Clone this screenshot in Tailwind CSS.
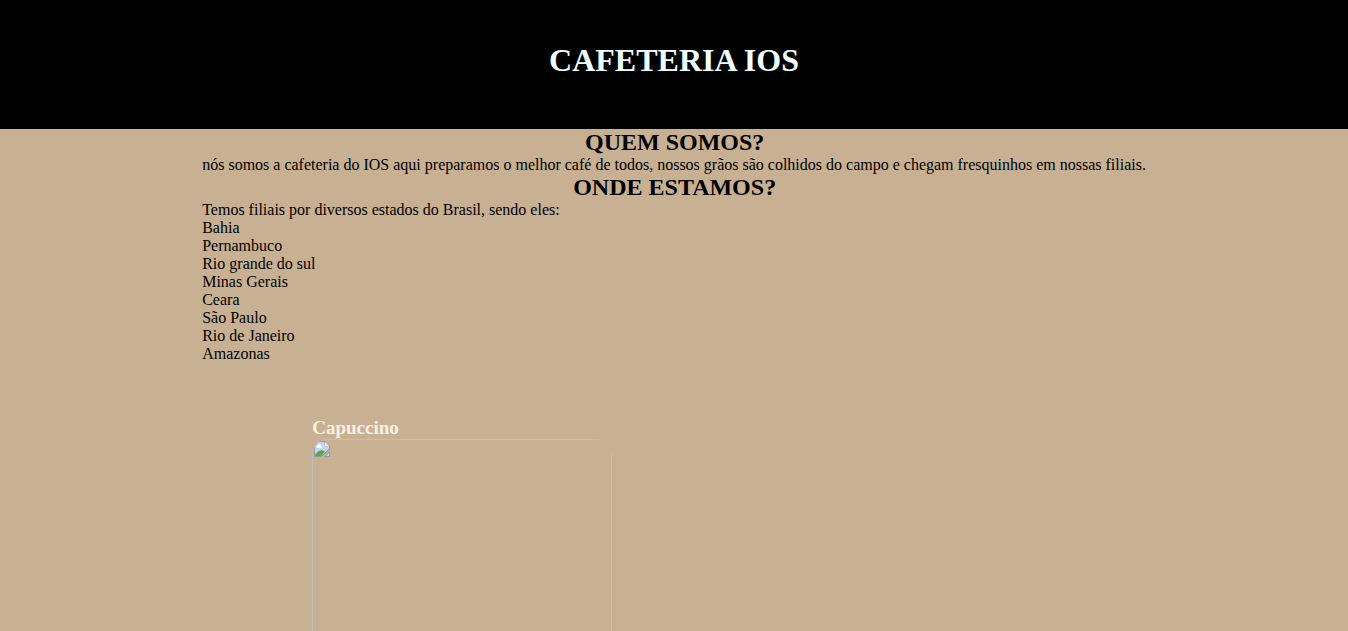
<!DOCTYPE html>
<html lang="pt-BR">
<head>
<meta charset="utf-8">
<title>Cafeteria IOS</title>
<script src="https://cdn.jsdelivr.net/npm/@tailwindcss/browser@4"></script>
</head>
<body class="h-screen overflow-hidden bg-[#c8b192] font-['Liberation_Serif',serif] text-base leading-[18px] text-black">
<header class="bg-black pt-[42px] pb-[51px]">
  <h1 class="text-center text-[32px] leading-[36px] font-bold text-[#f0ffff]">CAFETERIA IOS</h1>
</header>
<main class="pr-[14.9%] pl-[15%]">
  <section>
    <h2 class="text-center text-2xl leading-[27px] font-bold">QUEM SOMOS?</h2>
    <p>nós somos a cafeteria do IOS aqui preparamos o melhor café de todos, nossos grãos são colhidos do campo e chegam fresquinhos em nossas filiais.</p>
  </section>
  <section>
    <h2 class="text-center text-2xl leading-[27px] font-bold">ONDE ESTAMOS?</h2>
    <p>Temos filiais por diversos estados do Brasil, sendo eles:</p>
    <ul>
      <li>Bahia</li>
      <li>Pernambuco</li>
      <li>Rio grande do sul</li>
      <li>Minas Gerais</li>
      <li>Ceara</li>
      <li>São Paulo</li>
      <li>Rio de Janeiro</li>
      <li>Amazonas</li>
    </ul>
  </section>
  <article class="mt-[54px] ml-[110px] w-[300px]">
    <h3 class="mb-px text-[19px] leading-[21px] font-bold text-[#faf0e6]">Capuccino</h3>
    <div class="overflow-hidden rounded-[15px/20px]">
      <div class="h-[400px] border border-[#c0c0c0] p-px">
        <svg class="block" width="16" height="16" viewBox="0 0 16 16" role="img" aria-label="Imagem indisponível">
          <path d="M0 0h11l5 5v3l-8.500 8H0z" fill="#939ba5"/>
          <path d="M1 1h9.500v4.500H15v2L6.500 15H1z" fill="#dfe9fa"/>
          <path d="M1 1h9v5h5v1.500L6 15H1z" fill="#c3d5f4"/>
          <path d="M3 7a1.500 1.500 0 0 1 .5-2.500 1.800 1.800 0 0 1 3.500.5 1.200 1.200 0 0 1 0 2z" fill="#fff"/>
          <path d="M1 15v-1c1.500-3 4.500-5.500 8-4.500l2 1L6.500 15z" fill="#53ae35"/>
          <path d="M11 1v4h4z" fill="#f6f8fb"/>
          <path d="M16 10v6h-6z" fill="#939ba5"/>
          <path d="M15 12v3h-3z" fill="#c3d5f4"/>
        </svg>
      </div>
    </div>
  </article>
</main>
</body>
</html>
